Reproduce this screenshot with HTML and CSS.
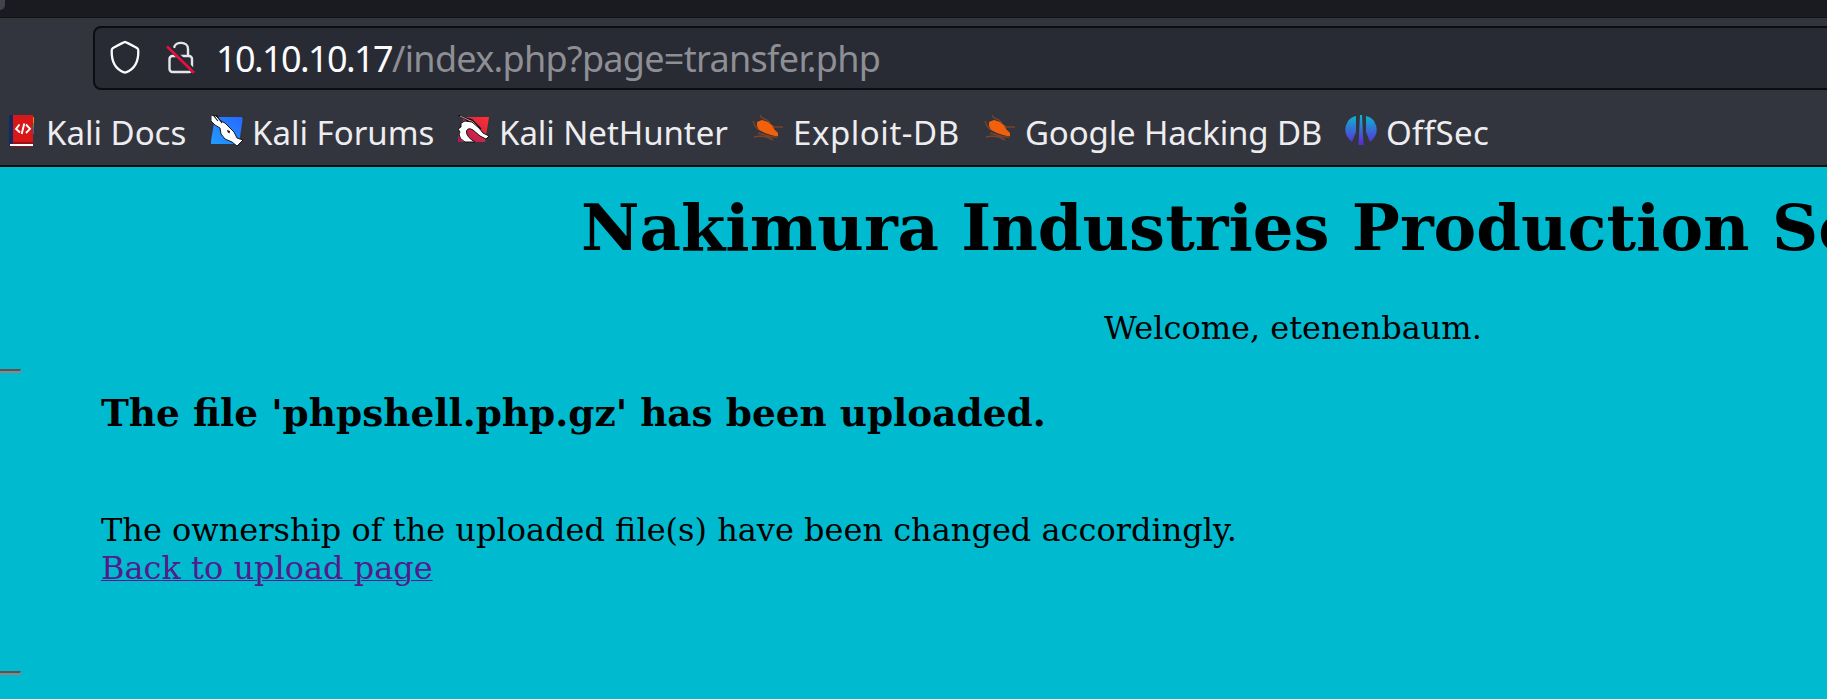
FILE: index.html
```
<!DOCTYPE html>
<html lang="en">
<head>
<meta charset="utf-8">
<title>Nakimura Industries</title>
<link rel="stylesheet" href="styles.css">
</head>
<body>
<header class="browser">
  <div class="tabs"><div class="tab-corner"></div></div>
  <div class="toolbar">
    <div class="urlbar">
      <svg class="shield" viewBox="0 0 32 34" width="32" height="34"><path d="M16 2 Q17 2 28 8 Q29.5 9 29.3 11 C29.5 21 26 29 17 32.3 Q16 32.7 15 32.3 C6 29 2.5 21 2.7 11 Q2.5 9 4 8 Q15 2 16 2Z" fill="none" stroke="#fbfbfe" stroke-width="2.3"/></svg>
      <svg class="lock" viewBox="0 0 30 34" width="30" height="34"><g fill="none" stroke="#e6e6ea" stroke-width="2.4"><path d="M8 8 C9 1 22 1 22 9 V16"/><rect x="3.5" y="16" width="22.5" height="16" rx="3"/></g><path d="M2 5.8 L28.5 32" stroke="#282a34" stroke-width="5"/><path d="M1 6.5 L28 32.7" stroke="#e5103f" stroke-width="2.6"/></svg>
      <span class="url"><span class="host">10.10.10.17</span>/index.php?page=transfer.php</span>
    </div>
  </div>
  <nav class="bookmarks">
    <a class="bm docs"><svg viewBox="0 0 32 32" width="32" height="32"><path d="M4 0H8V32H5L4 30Z" fill="#142a5e"/><path d="M8 0H28V27H8Z" fill="#d71718"/><path d="M5 29H28V31H5Z" fill="#fff"/><path d="M8 27H28V29H8ZM6 31H28V32H6Z" fill="#9b1016"/><path d="M28 2H29V8H28Z" fill="#e58a22"/><path d="M28 8H29V13H28Z" fill="#2e9b57"/><path d="M28 13H29V19H28Z" fill="#3268bc"/><path d="M14.5 9.5 L11 13.8 L15 17.5 M21 9.5 L25 13.8 L21 18 M19.3 8.5 L16.7 19" fill="none" stroke="#fff" stroke-width="1.9"/></svg><span>Kali Docs</span></a>
    <a class="bm forums"><svg viewBox="0 0 32 32" width="32" height="32"><defs><linearGradient id="blue" x1="0" y1="1" x2="1" y2="0"><stop stop-color="#209cff"/><stop offset="1" stop-color="#2868ff"/></linearGradient></defs><path d="M4 2H30Q32 2 31.5 5L28 29H0V26Z" fill="url(#blue)"/><path d="M0 0L5 1 10 6 14 8 20 14 23 17 26 23 32 25 29 28 26 31 21 27 14 24 10 19 9 13 4 10 0 6Z" fill="#fff" stroke="#080808" stroke-width=".9"/><path d="M2 0L7 6M5 0L11 8" stroke="#111" stroke-width="1.1"/><path d="M16 15L19 16 18.5 18.5 16.5 17Z" fill="#111"/></svg><span>Kali Forums</span></a>
    <a class="bm hunter"><svg viewBox="0 0 32 32" width="32" height="32"><defs><linearGradient id="red" x1="0" y1="1" x2="1" y2="0"><stop stop-color="#aa185c"/><stop offset="1" stop-color="#ff3131"/></linearGradient></defs><path d="M6 2H31L27 27H0V22Z" fill="url(#red)"/><path d="M0 0L4 2 14 5 23 14 M3 1L13 8 19 13" fill="none" stroke="#111" stroke-width="1.5"/><path d="M2 1L15 7 21 13" fill="none" stroke="#ddd" stroke-width=".7"/><path d="M3 8L7 6 14 7 21 13 25 18 31 21 28 24 22 21 15 15 Q10 12 8.500 16 Q8 22 17 27H7Q1 24 1 19L2 17 0 14 3 12Z" fill="#fff" stroke="#111" stroke-width="1"/></svg><span>Kali NetHunter</span></a>
    <a class="bm exploit"><svg viewBox="0 0 32 32" width="32" height="32"><g id="bug"><path d="M5 7L10 5 16 7 21 11 22 14 26 18 26 21 23 21 19 20 13 18 7 15 5 11Z" fill="#f2600c"/><path d="M8 0L10 3 15 5 18 8M1 6L3 11 7 15M20 12H31M2 22L8 21 15 22 21 25M6 18L13 20 20 22 26 22" fill="none" stroke="#b34c18" stroke-width="1.4" opacity=".55"/></g></svg><span>Exploit-DB</span></a>
    <a class="bm google"><svg viewBox="0 0 32 32" width="32" height="32"><use href="#bug"/></svg><span>Google Hacking DB</span></a>
    <a class="bm offsec"><svg viewBox="0 0 32 32" width="32" height="32"><defs><linearGradient id="off" x1="0" y1="0" x2="0" y2="32" gradientUnits="userSpaceOnUse"><stop stop-color="#08b9cf"/><stop offset="1" stop-color="#6819d8"/></linearGradient></defs><path d="M11 1V17L7 27Q-4 18 3 6Q6 2 11 1ZM21 1V17L25 27Q36 18 29 6Q26 2 21 1ZM15 0H17L18.5 30H13.5Z" fill="url(#off)"/></svg><span>OffSec</span></a>
  </nav>
</header>
<main class="page">
  <h1>Nakimura Industries Production Server</h1>
  <p class="welcome">Welcome, etenenbaum.</p>
  <div class="rule"></div>
  <h3>The file 'phpshell.php.gz' has been uploaded.</h3>
  <p class="owner">The ownership of the uploaded file(s) have been changed accordingly.<br><a class="back" href="#">Back to upload page</a></p>
  <div class="rule"></div>
</main>
</body>
</html>
```
FILE: styles.css
```
*{box-sizing:border-box}
body{margin:0;width:1827px;height:699px;overflow:hidden;background:#00bbd0;color:#000;font-family:"DejaVu Serif",serif;font-size:32px;line-height:38px}
.browser{height:167px;background:#33353e;border-bottom:2px solid #0d0e13;font-family:"Noto Sans",sans-serif;color:#ededf0}
.tabs{height:18px;background:#1a1b20;border-bottom:1px solid #111216}
.tab-corner{width:5px;height:10px;background:#42444c;border-bottom-right-radius:5px}
.toolbar{height:72px;padding:8px 0 0 93px}
.urlbar{display:flex;align-items:center;width:1760px;height:64px;border:2px solid #0c0d12;border-radius:8px;background:#282a34;padding-left:14px}
.shield{margin-top:-3px}
.lock{margin-left:25px;margin-top:-3px}
.url{margin:1px 0 0 20px;font-size:36px;line-height:48px;white-space:nowrap;color:#8e8f94;letter-spacing:-.7px}
.host{color:#fbfbfe;letter-spacing:-1.6px}
.bookmarks{display:flex;height:75px;padding:25px 0 0 5px}
.bm{display:flex;height:34px;flex:none;white-space:nowrap;font-size:33px;line-height:36px}
.bm svg{flex:none}
.bm span{margin-left:9px}
.docs{width:206px}
.forums{width:247px}
.hunter{width:294px;letter-spacing:-.05px}
.exploit{width:232px;letter-spacing:.55px}
.google{width:361px;letter-spacing:-.15px}
.offsec{letter-spacing:.35px}
.page{height:532px}
h1{margin:0;padding:29px 0 0 581px;font-size:64px;line-height:64px;white-space:nowrap}
.welcome{margin:49px 0 0;padding-left:1104px}
.rule{width:21px;height:4px;border-top:2px solid #555;border-bottom:2px solid #888;border-right:1px solid #888}
.welcome + .rule{margin-top:22px}
h3{margin:18px 0 0;padding-left:101px;font-size:37.44px;line-height:44px;white-space:nowrap}
.owner{margin:76px 0 0;padding-left:101px;white-space:nowrap}
.back{color:#551a8b;text-decoration-thickness:1px}
.owner + .rule{margin-top:84px}
```
